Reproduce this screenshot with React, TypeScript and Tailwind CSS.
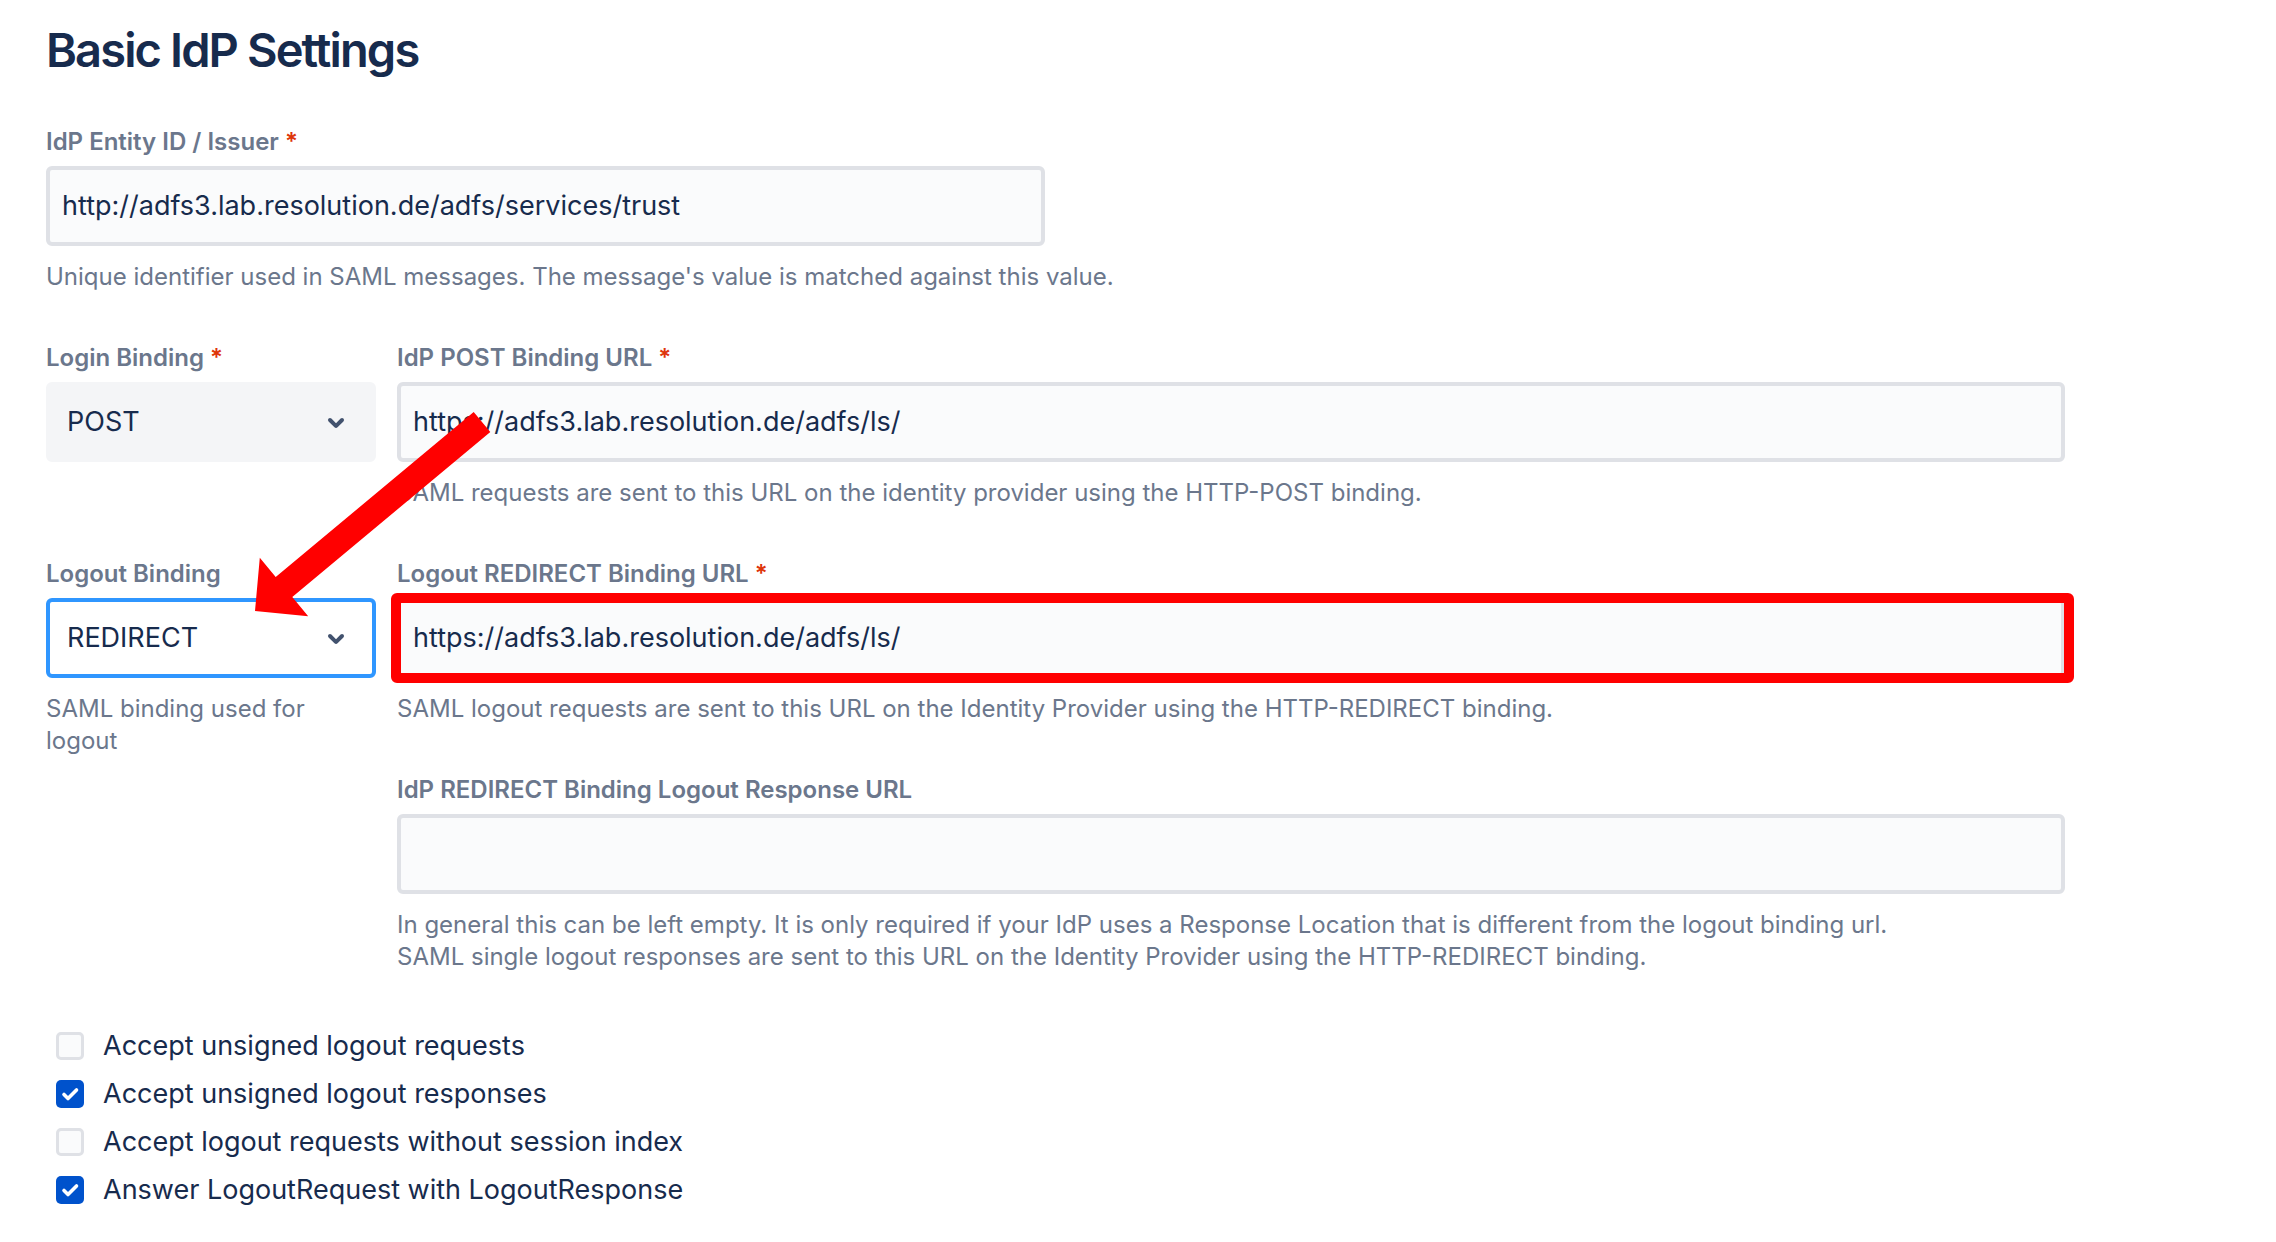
import React from 'react';

function Chevron() {
    return (
        <svg width="48" height="48" viewBox="0 0 24 24" className="shrink-0">
            <path
                fill="#42526E"
                d="M8.292 10.293a1.009 1.009 0 0 0 0 1.419l2.939 2.965c.218.215.5.322.779.322s.556-.107.769-.322l2.93-2.955a1.01 1.01 0 0 0 0-1.419.987.987 0 0 0-1.406 0l-2.298 2.317-2.307-2.327a.99.99 0 0 0-1.406 0z"
            />
        </svg>
    );
}

function Label({ text, required }: { text: string; required?: boolean }) {
    return (
        <div className="text-[24px] leading-[24px] font-semibold text-[#6B778C] mb-[12px] whitespace-nowrap">
            {text}
            {required && <span className="text-[#DE350B]"> *</span>}
        </div>
    );
}

function Help({ children }: { children: React.ReactNode }) {
    return <div className="mt-[15px] text-[24px] leading-[32px] text-[#6B778C] whitespace-nowrap">{children}</div>;
}

function TextInput({ value }: { value: string }) {
    return (
        <div className="h-[80px] w-full rounded-[6px] border-4 border-[#DFE1E6] bg-[#FAFBFC] px-[12px] flex items-center text-[27px] text-[#172B4D]">
            {value}
        </div>
    );
}

function Select({ value, focused }: { value: string; focused?: boolean }) {
    return (
        <div
            className={
                focused
                    ? 'h-[80px] w-full rounded-[6px] border-4 border-[#2F96FF] bg-white pl-[17px] pr-[12px] flex items-center justify-between text-[27px] text-[#172B4D]'
                    : 'h-[80px] w-full rounded-[6px] border-4 border-[#F4F5F7] bg-[#F4F5F7] pl-[17px] pr-[12px] flex items-center justify-between text-[27px] text-[#172B4D]'
            }
        >
            <span>{value}</span>
            <Chevron />
        </div>
    );
}

function Check({ label, checked }: { label: string; checked?: boolean }) {
    return (
        <div className="h-[48px] flex items-center">
            {checked ? (
                <div className="ml-[10px] w-[28px] h-[28px] rounded-[5px] bg-[#0052CC] flex items-center justify-center">
                    <svg width="28" height="28" viewBox="0 0 28 28">
                        <polyline points="8,14.5 12,18.5 20.5,10" fill="none" stroke="white" strokeWidth="3.6" strokeLinecap="round" strokeLinejoin="round" />
                    </svg>
                </div>
            ) : (
                <div className="ml-[10px] w-[28px] h-[28px] rounded-[5px] border-[3px] border-[#DFE1E6] bg-[#FAFBFC]" />
            )}
            <span className="ml-[19px] text-[27px] leading-[28px] text-[#172B4D]">{label}</span>
        </div>
    );
}

export default function App() {
    return (
        <div className="relative w-[2276px] min-h-[1242px] bg-white font-[Inter,Liberation_Sans,sans-serif] pl-[46px] pt-[26px] pb-[20px]">
            <h1 className="text-[47px] leading-[47px] font-semibold tracking-[-0.04em] text-[#172B4D]">Basic IdP Settings</h1>

            {/* Entity ID */}
            <div className="mt-[57px] mb-[53px]">
                <Label text="IdP Entity ID / Issuer" required />
                <div className="w-[999px]">
                    <TextInput value="http://adfs3.lab.resolution.de/adfs/services/trust" />
                </div>
                <Help>Unique identifier used in SAML messages. The message's value is matched against this value.</Help>
            </div>

            {/* Login binding row */}
            <div className="flex items-start gap-[21px] mb-[53px]">
                <div className="w-[330px] shrink-0">
                    <Label text="Login Binding" required />
                    <Select value="POST" />
                </div>
                <div className="w-[1668px]">
                    <Label text="IdP POST Binding URL" required />
                    <TextInput value="https://adfs3.lab.resolution.de/adfs/ls/" />
                    <Help>SAML requests are sent to this URL on the identity provider using the HTTP-POST binding.</Help>
                </div>
            </div>

            {/* Logout binding row */}
            <div className="flex items-start gap-[21px] mb-[49px]">
                <div className="w-[330px] shrink-0">
                    <Label text="Logout Binding" />
                    <Select value="REDIRECT" focused />
                    <Help>
                        SAML binding used for
                        <br />
                        logout
                    </Help>
                </div>
                <div className="w-[1668px]">
                    <div className="mb-[53px]">
                        <Label text="Logout REDIRECT Binding URL" required />
                        <div className="relative">
                            <TextInput value="https://adfs3.lab.resolution.de/adfs/ls/" />
                            <div className="absolute -left-[6px] -right-[9px] -top-[5px] -bottom-[5px] border-[10px] border-[#FF0000] rounded-[6px] pointer-events-none" />
                        </div>
                        <Help>SAML logout requests are sent to this URL on the Identity Provider using the HTTP-REDIRECT binding.</Help>
                    </div>
                    <div>
                        <Label text="IdP REDIRECT Binding Logout Response URL" />
                        <TextInput value="" />
                        <Help>
                            In general this can be left empty. It is only required if your IdP uses a Response Location that is different from the logout binding url.
                            <br />
                            SAML single logout responses are sent to this URL on the Identity Provider using the HTTP-REDIRECT binding.
                        </Help>
                    </div>
                </div>
            </div>

            {/* Checkboxes */}
            <div className="flex flex-col">
                <Check label="Accept unsigned logout requests" />
                <Check label="Accept unsigned logout responses" checked />
                <Check label="Accept logout requests without session index" />
                <Check label="Answer LogoutRequest with LogoutResponse" checked />
            </div>

            {/* red annotation arrow */}
            <svg className="absolute top-0 left-0 pointer-events-none" width="2276" height="1242" viewBox="0 0 2276 1242">
                <polygon
                    fill="#FF0000"
                    points="473.7,412 275.7,577 259.8,557.7 255,611 308.2,616.3 292.3,597 490.3,432"
                />
            </svg>
        </div>
    );
}
